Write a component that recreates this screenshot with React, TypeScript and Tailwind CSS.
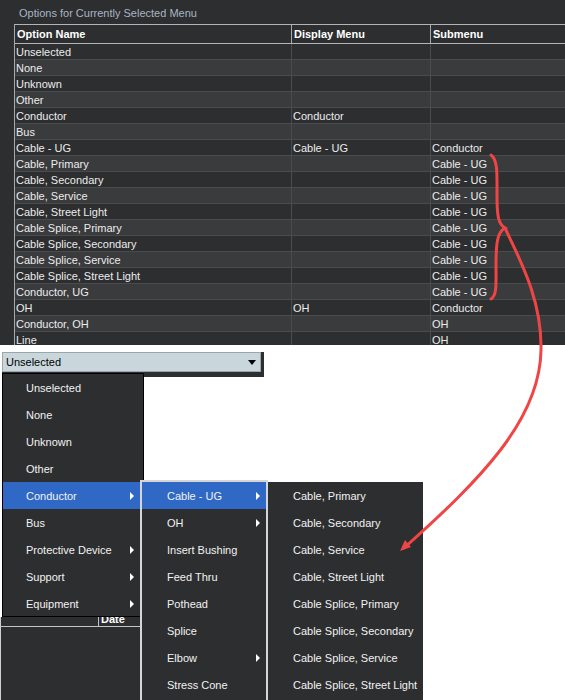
import React from "react"

const rows: [string, string, string][] = [
  ["Unselected", "", ""],
  ["None", "", ""],
  ["Unknown", "", ""],
  ["Other", "", ""],
  ["Conductor", "Conductor", ""],
  ["Bus", "", ""],
  ["Cable - UG", "Cable - UG", "Conductor"],
  ["Cable, Primary", "", "Cable - UG"],
  ["Cable, Secondary", "", "Cable - UG"],
  ["Cable, Service", "", "Cable - UG"],
  ["Cable, Street Light", "", "Cable - UG"],
  ["Cable Splice, Primary", "", "Cable - UG"],
  ["Cable Splice, Secondary", "", "Cable - UG"],
  ["Cable Splice, Service", "", "Cable - UG"],
  ["Cable Splice, Street Light", "", "Cable - UG"],
  ["Conductor, UG", "", "Cable - UG"],
  ["OH", "OH", "Conductor"],
  ["Conductor, OH", "", "OH"],
  ["Line", "", "OH"],
]

const mainMenu: [string, boolean][] = [
  ["Unselected", false],
  ["None", false],
  ["Unknown", false],
  ["Other", false],
  ["Conductor", true],
  ["Bus", false],
  ["Protective Device", true],
  ["Support", true],
  ["Equipment", true],
]

const conductorMenu: [string, boolean][] = [
  ["Cable - UG", true],
  ["OH", true],
  ["Insert Bushing", false],
  ["Feed Thru", false],
  ["Pothead", false],
  ["Splice", false],
  ["Elbow", true],
  ["Stress Cone", false],
]

const cableMenu = [
  "Cable, Primary",
  "Cable, Secondary",
  "Cable, Service",
  "Cable, Street Light",
  "Cable Splice, Primary",
  "Cable Splice, Secondary",
  "Cable Splice, Service",
  "Cable Splice, Street Light",
]

function Arrow() {
  return <span className="w-0 h-0 border-y-[4px] border-y-transparent border-l-[4px] border-l-white" />
}

function MenuItem({ label, sub, active, pl, pr }: { label: string; sub?: boolean; active?: boolean; pl: string; pr: string }) {
  return (
    <div className={`h-[27px] shrink-0 flex items-center justify-between whitespace-nowrap ${pl} ${pr} ${active ? "bg-[#2f69c5]" : ""}`}>
      <span className="text-[#f2f2f2]">{label}</span>
      {sub && <Arrow />}
    </div>
  )
}

export default function App() {
  return (
    <div
      className="relative w-[565px] h-[700px] bg-white overflow-hidden text-[11px] leading-[14px]"
      style={{ fontFamily: '"Liberation Sans", Arial, sans-serif' }}
    >
      {/* options table */}
      <div className="h-[345px] bg-[#2d2e30] overflow-hidden pt-[6px]">
        <div className="pl-[19px] h-[14px] text-[#a9b5c2]">Options for Currently Selected Menu</div>
        <div className="mt-[4px] ml-[14px] border-l border-[#a8a8a8]">
          <div className="grid grid-cols-[277px_139px_1fr] h-[20px] border-y border-[#b4b4b4] font-bold text-white">
            <div className="px-[2px] flex items-center border-r border-[#a8a8a8]">Option Name</div>
            <div className="px-[2px] flex items-center border-r border-[#a8a8a8]">Display Menu</div>
            <div className="px-[2px] flex items-center">Submenu</div>
          </div>
          {rows.map((r, i) => (
            <div
              key={i}
              className={`grid grid-cols-[277px_139px_1fr] h-[16px] border-b border-[#4a4b4d] text-[#ececec] ${i % 2 ? "bg-[#3a3b3d]" : "bg-[#2d2e30]"}`}
            >
              <div className="px-[1px] flex items-center border-r border-[#4a4b4d]">{r[0]}</div>
              <div className="px-[1px] flex items-center border-r border-[#4a4b4d]">{r[1]}</div>
              <div className="px-[1px] flex items-center">{r[2]}</div>
            </div>
          ))}
        </div>
      </div>

      {/* combo + cascading menus */}
      <div className="pt-[7px] pl-[2px]">
        <div className="w-[262px] h-[25px] bg-[#2d2e30]">
          <div className="w-[259px] h-[20px] bg-[#c9d7dc] border border-[#9aa6aa] flex items-center justify-between pl-[3px] pr-[4px] text-black">
            <span>Unselected</span>
            <span className="w-0 h-0 border-x-[4px] border-x-transparent border-t-[5px] border-t-black" />
          </div>
        </div>
        <div className="-mt-[4px] flex items-start">
          <div className="w-[142px] flex flex-col">
            <div className="h-[244px] border border-black bg-[#2d2e30] flex flex-col">
              {mainMenu.map(([l, s]) => (
                <MenuItem key={l} label={l} sub={s} active={l === "Conductor"} pl="pl-[23px]" pr="pr-[9px]" />
              ))}
            </div>
            <div className="-ml-[2px] w-[140px] h-[90px] bg-[#2d2e30] border-l border-[#cfcfcf]">
              <div className="h-[10px] border-b border-[#c4c4c4] flex items-end overflow-hidden">
                <div className="ml-[97px] h-[13px] border-l border-[#c4c4c4] pl-[2px] font-bold text-white leading-[13px]">Date</div>
              </div>
            </div>
          </div>
          <div className="-ml-[4px] mt-[107px] w-[128px] h-[240px] border-2 border-[#d6d6d6] bg-[#2d2e30] flex flex-col">
            {conductorMenu.map(([l, s]) => (
              <MenuItem key={l} label={l} sub={s} active={l === "Cable - UG"} pl="pl-[25px]" pr="pr-[6px]" />
            ))}
          </div>
          <div className="mt-[109px] w-[155px] h-[240px] bg-[#2d2e30] flex flex-col">
            {cableMenu.map((l) => (
              <MenuItem key={l} label={l} pl="pl-[25px]" pr="pr-[6px]" />
            ))}
          </div>
        </div>
      </div>

      {/* red annotation */}
      <svg className="absolute inset-0 pointer-events-none" width="565" height="700" viewBox="0 0 565 700">
        <g fill="none" stroke="#f04545" strokeWidth="3" strokeLinecap="round">
          <path d="M491,155 C498,160 497,175 497,195 C497,215 498,224 505,228 C497,232 496,245 496,265 C496,285 497,295 491,299" />
          <path d="M505,228 C520,260 542,300 541,350 C540,420 480,480 404,548" />
        </g>
        <polygon points="400,551 411,547 405,540" fill="#f04545" />
      </svg>
    </div>
  )
}
